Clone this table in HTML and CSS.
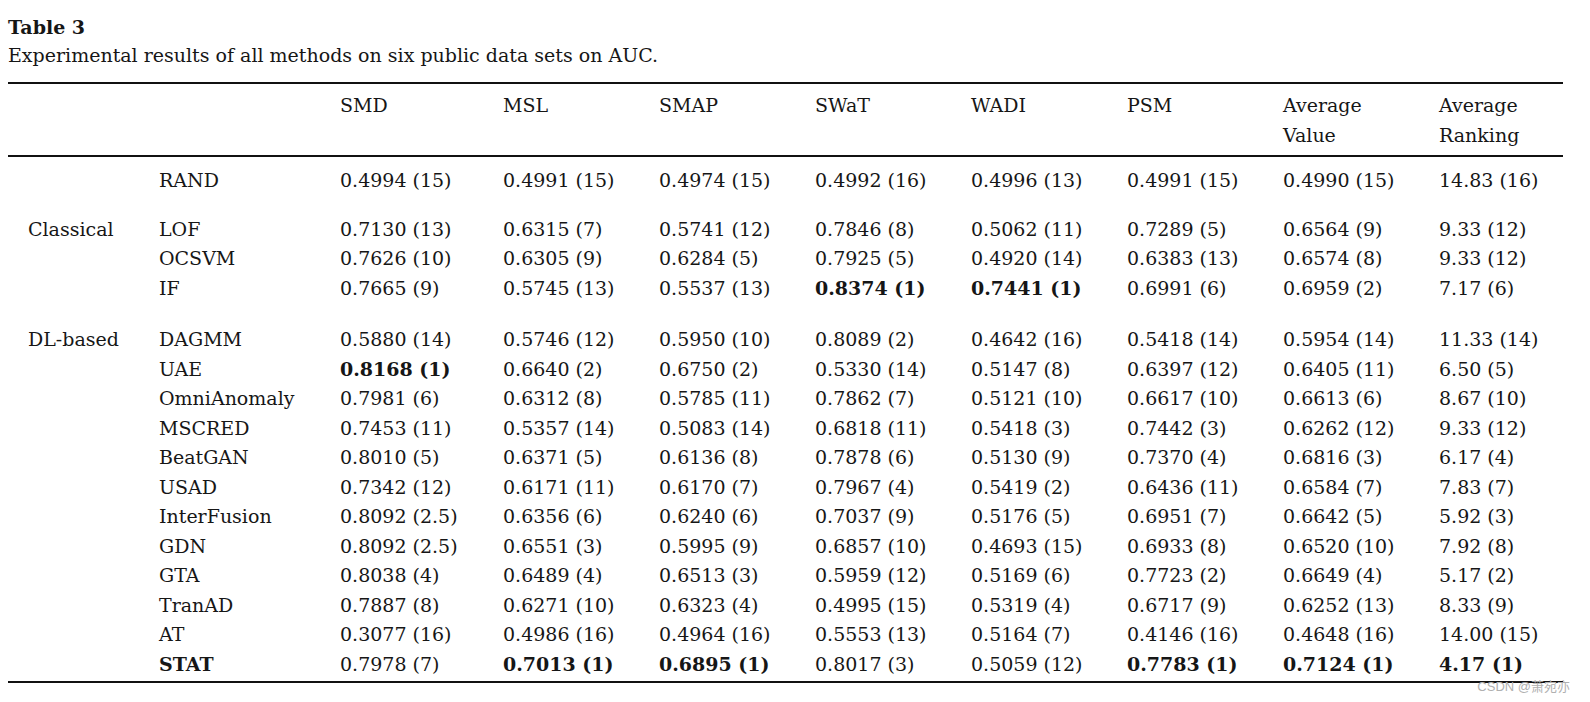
FILE: index.html
```html
<!DOCTYPE html>
<html>
<head>
<meta charset="utf-8">
<link rel="stylesheet" href="styles.css">
</head>
<body>
<div class="page">
  <div class="title">Table 3</div>
  <div class="caption">Experimental results of all methods on six public data sets on AUC.</div>
  <table class="results">
    <colgroup>
      <col class="c-group"><col class="c-name"><col class="c-smd"><col class="c-d"><col class="c-d"><col class="c-d"><col class="c-d"><col class="c-d"><col class="c-d"><col class="c-last">
    </colgroup>
    <thead>
      <tr><th></th><th></th><th>SMD</th><th>MSL</th><th>SMAP</th><th>SWaT</th><th>WADI</th><th>PSM</th><th>Average<br>Value</th><th>Average<br>Ranking</th></tr>
    </thead>
    <tbody class="first">
      <tr><td></td><td>RAND</td><td>0.4994 (15)</td><td>0.4991 (15)</td><td>0.4974 (15)</td><td>0.4992 (16)</td><td>0.4996 (13)</td><td>0.4991 (15)</td><td>0.4990 (15)</td><td>14.83 (16)</td></tr>
    </tbody>
    <tbody class="group">
      <tr><td>Classical</td><td>LOF</td><td>0.7130 (13)</td><td>0.6315 (7)</td><td>0.5741 (12)</td><td>0.7846 (8)</td><td>0.5062 (11)</td><td>0.7289 (5)</td><td>0.6564 (9)</td><td>9.33 (12)</td></tr>
      <tr><td></td><td>OCSVM</td><td>0.7626 (10)</td><td>0.6305 (9)</td><td>0.6284 (5)</td><td>0.7925 (5)</td><td>0.4920 (14)</td><td>0.6383 (13)</td><td>0.6574 (8)</td><td>9.33 (12)</td></tr>
      <tr><td></td><td>IF</td><td>0.7665 (9)</td><td>0.5745 (13)</td><td>0.5537 (13)</td><td class="b">0.8374 (1)</td><td class="b">0.7441 (1)</td><td>0.6991 (6)</td><td>0.6959 (2)</td><td>7.17 (6)</td></tr>
    </tbody>
    <tbody class="group dl">
      <tr><td>DL-based</td><td>DAGMM</td><td>0.5880 (14)</td><td>0.5746 (12)</td><td>0.5950 (10)</td><td>0.8089 (2)</td><td>0.4642 (16)</td><td>0.5418 (14)</td><td>0.5954 (14)</td><td>11.33 (14)</td></tr>
      <tr><td></td><td>UAE</td><td class="b">0.8168 (1)</td><td>0.6640 (2)</td><td>0.6750 (2)</td><td>0.5330 (14)</td><td>0.5147 (8)</td><td>0.6397 (12)</td><td>0.6405 (11)</td><td>6.50 (5)</td></tr>
      <tr><td></td><td>OmniAnomaly</td><td>0.7981 (6)</td><td>0.6312 (8)</td><td>0.5785 (11)</td><td>0.7862 (7)</td><td>0.5121 (10)</td><td>0.6617 (10)</td><td>0.6613 (6)</td><td>8.67 (10)</td></tr>
      <tr><td></td><td>MSCRED</td><td>0.7453 (11)</td><td>0.5357 (14)</td><td>0.5083 (14)</td><td>0.6818 (11)</td><td>0.5418 (3)</td><td>0.7442 (3)</td><td>0.6262 (12)</td><td>9.33 (12)</td></tr>
      <tr><td></td><td>BeatGAN</td><td>0.8010 (5)</td><td>0.6371 (5)</td><td>0.6136 (8)</td><td>0.7878 (6)</td><td>0.5130 (9)</td><td>0.7370 (4)</td><td>0.6816 (3)</td><td>6.17 (4)</td></tr>
      <tr><td></td><td>USAD</td><td>0.7342 (12)</td><td>0.6171 (11)</td><td>0.6170 (7)</td><td>0.7967 (4)</td><td>0.5419 (2)</td><td>0.6436 (11)</td><td>0.6584 (7)</td><td>7.83 (7)</td></tr>
      <tr><td></td><td>InterFusion</td><td>0.8092 (2.5)</td><td>0.6356 (6)</td><td>0.6240 (6)</td><td>0.7037 (9)</td><td>0.5176 (5)</td><td>0.6951 (7)</td><td>0.6642 (5)</td><td>5.92 (3)</td></tr>
      <tr><td></td><td>GDN</td><td>0.8092 (2.5)</td><td>0.6551 (3)</td><td>0.5995 (9)</td><td>0.6857 (10)</td><td>0.4693 (15)</td><td>0.6933 (8)</td><td>0.6520 (10)</td><td>7.92 (8)</td></tr>
      <tr><td></td><td>GTA</td><td>0.8038 (4)</td><td>0.6489 (4)</td><td>0.6513 (3)</td><td>0.5959 (12)</td><td>0.5169 (6)</td><td>0.7723 (2)</td><td>0.6649 (4)</td><td>5.17 (2)</td></tr>
      <tr><td></td><td>TranAD</td><td>0.7887 (8)</td><td>0.6271 (10)</td><td>0.6323 (4)</td><td>0.4995 (15)</td><td>0.5319 (4)</td><td>0.6717 (9)</td><td>0.6252 (13)</td><td>8.33 (9)</td></tr>
      <tr><td></td><td>AT</td><td>0.3077 (16)</td><td>0.4986 (16)</td><td>0.4964 (16)</td><td>0.5553 (13)</td><td>0.5164 (7)</td><td>0.4146 (16)</td><td>0.4648 (16)</td><td>14.00 (15)</td></tr>
      <tr><td></td><td class="b">STAT</td><td>0.7978 (7)</td><td class="b">0.7013 (1)</td><td class="b">0.6895 (1)</td><td>0.8017 (3)</td><td>0.5059 (12)</td><td class="b">0.7783 (1)</td><td class="b">0.7124 (1)</td><td class="b">4.17 (1)</td></tr>
    </tbody>
  </table>
  <div class="watermark">CSDN @萧宛亦</div>
</div>
</body>
</html>
```

FILE: styles.css
```css
html, body {
  margin: 0;
  padding: 0;
  background: #ffffff;
}
body {
  font-family: "DejaVu Serif", "Liberation Serif", serif;
  color: #161616;
  min-height: 702px;
}
.page {
  position: relative;
  width: 1555px;
  padding: 14px 0 0 8px;
}
.title {
  font-weight: bold;
  font-size: 19px;
  line-height: 27px;
}
.caption {
  font-size: 19px;
  line-height: 29px;
}
.results {
  margin-top: 12px;
  width: 1555px;
  table-layout: fixed;
  border-collapse: collapse;
  font-size: 19px;
  line-height: 29.5px;
  border-top: 2px solid #111;
  border-bottom: 2px solid #111;
}
.c-group { width: 151px; }
.c-name { width: 181px; }
.c-smd { width: 163px; }
.c-d { width: 156px; }
.c-last { width: 124px; }
.results th, .results td {
  padding: 0;
  text-align: left;
  vertical-align: top;
  white-space: nowrap;
  font-weight: normal;
}
.results th:first-child, .results td:first-child {
  padding-left: 20px;
}
.results thead th {
  padding-top: 7px;
  padding-bottom: 5px;
  border-bottom: 2px solid #111;
}
.results tbody.first tr td {
  padding-top: 9px;
}
.results tbody.group tr:first-child td {
  padding-top: 19px;
}
.results tbody.dl tr:first-child td {
  padding-top: 22px;
}
.results tbody.dl tr:last-child td {
  padding-bottom: 2px;
}
.results td.b {
  font-weight: bold;
}
.watermark {
  position: absolute;
  right: -7px;
  bottom: -11px;
  font-family: "Liberation Sans", "Noto Sans CJK SC", sans-serif;
  font-size: 13px;
  line-height: 15px;
  color: #b0b0b0;
}
```
